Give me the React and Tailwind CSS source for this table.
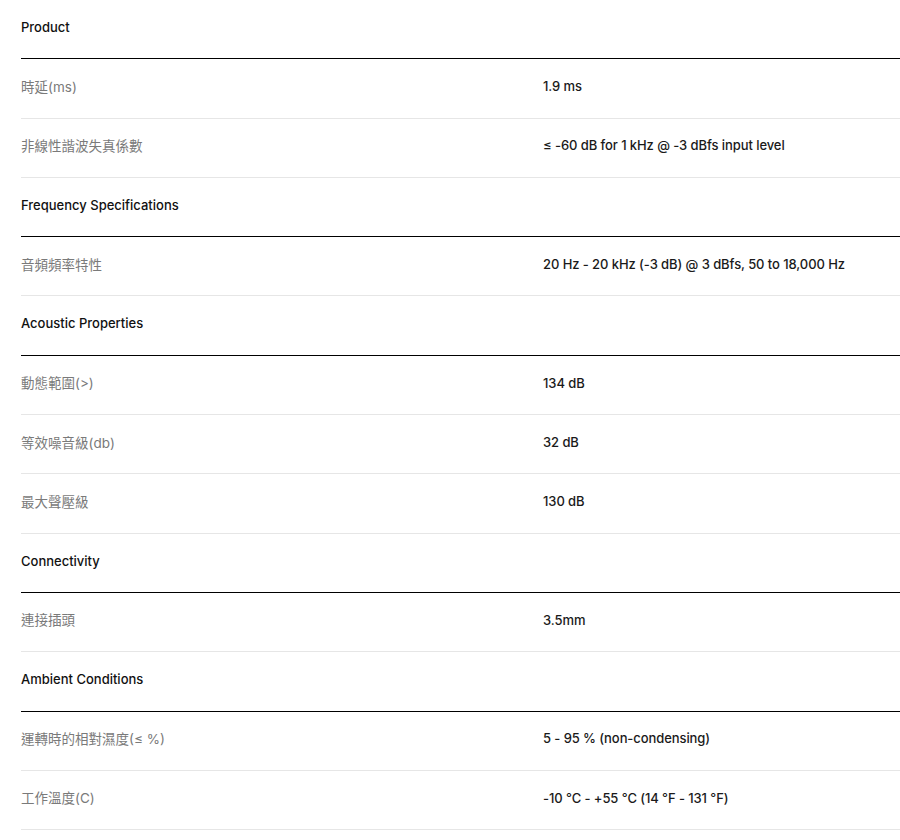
import React from 'react';

const sections = [
    {
        title: "Product",
        rows: [
            ["時延(ms)", "1.9 ms"],
            ["非線性諧波失真係數", "≤ -60 dB for 1 kHz @ -3 dBfs input level"],
        ],
    },
    {
        title: "Frequency Specifications",
        rows: [["音頻頻率特性", "20 Hz - 20 kHz (-3 dB) @ 3 dBfs, 50 to 18,000 Hz"]],
    },
    {
        title: "Acoustic Properties",
        rows: [
            ["動態範圍(>)", "134 dB"],
            ["等效噪音級(db)", "32 dB"],
            ["最大聲壓級", "130 dB"],
        ],
    },
    {
        title: "Connectivity",
        rows: [["連接插頭", "3.5mm"]],
    },
    {
        title: "Ambient Conditions",
        rows: [
            ["運轉時的相對濕度(≤ %)", "5 - 95 % (non-condensing)"],
            ["工作溫度(C)", "-10 °C - +55 °C (14 °F - 131 °F)"],
        ],
    },
];

const App = () => {
    return (
        <div className="min-h-screen bg-white pl-[21px] font-['Inter','Noto_Sans_CJK_TC',sans-serif] text-[13px] antialiased">
            {sections.map((section) => (
                <div key={section.title}>
                    <div className="h-[59.3px] flex items-center pb-[3px] border-b border-black font-medium text-[#111]">
                        {section.title}
                    </div>
                    {section.rows.map(([label, value]) => (
                        <div key={label} className="h-[59.3px] grid grid-cols-[522px_1fr] items-center pb-[3px] border-b border-[#e6e6e6]">
                            <div className="text-[13.5px] text-[#7a7a7a]">{label}</div>
                            <div className="font-medium text-[#1a1a1a] tracking-[-0.08px]">{value}</div>
                        </div>
                    ))}
                </div>
            ))}
        </div>
    );
};

export default App;
